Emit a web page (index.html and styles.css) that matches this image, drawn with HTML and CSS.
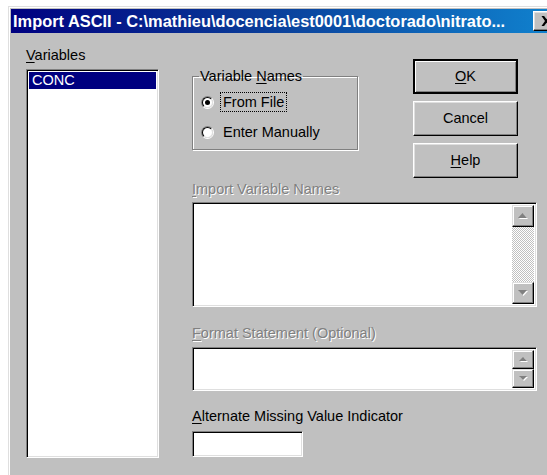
FILE: index.html
```html
<!DOCTYPE html>
<html lang="en">
<head>
<meta charset="utf-8">
<title>Import ASCII</title>
<link rel="stylesheet" href="styles.css">
</head>
<body>
<div class="window">
  <div class="titlebar">
    <span class="title">Import ASCII - C:\mathieu\docencia\est0001\doctorado\nitrato...</span>
    <button class="close" aria-label="Close">
      <svg width="11" height="10" viewBox="0 0 11 10"><path d="M0.5 0h2.6L5.5 3.3 7.9 0h2.6L7 5l3.5 5H7.9L5.5 6.7 3.1 10H0.5L4 5z" fill="#000"/></svg>
    </button>
  </div>
  <div class="content">
    <div class="left-col">
      <div class="label"><u>V</u>ariables</div>
      <div class="sunken listbox">
        <div class="list-item selected">CONC</div>
      </div>
    </div>
    <div class="right-col">
      <div class="top-row">
        <fieldset class="group">
          <legend>Variable <u>N</u>ames</legend>
          <div class="radio-row">
            <span class="radio"><span class="radio-in"><span class="dot"></span></span></span>
            <span class="focus">From File</span>
          </div>
          <div class="radio-row">
            <span class="radio"><span class="radio-in"></span></span>
            <span class="plain">Enter Manually</span>
          </div>
        </fieldset>
        <div class="buttons">
          <button class="btn default"><u>O</u>K</button>
          <button class="btn">Cancel</button>
          <button class="btn"><u>H</u>elp</button>
        </div>
      </div>

      <div class="label disabled import-label"><u>I</u>mport Variable Names</div>
      <div class="sunken field names-field">
        <div class="field-text"></div>
        <div class="scrollbar">
          <span class="sb-btn tall">
            <svg width="10" height="6" viewBox="0 0 10 6"><path d="M1 6L5.5 1 10 6z" fill="#fff"/><path d="M0 5L4.5 0 9 5z" fill="#808080"/></svg>
          </span>
          <span class="sb-track"></span>
          <span class="sb-btn tall">
            <svg width="10" height="6" viewBox="0 0 10 6"><path d="M1 1h9L5.5 6z" fill="#fff"/><path d="M0 0h9L4.5 5z" fill="#808080"/></svg>
          </span>
        </div>
      </div>

      <div class="label disabled format-label"><u>F</u>ormat Statement (Optional)</div>
      <div class="sunken field format-field">
        <div class="field-text"></div>
        <div class="scrollbar">
          <span class="sb-btn">
            <svg width="9" height="5" viewBox="0 0 9 5"><path d="M1 5L5 1 9 5z" fill="#fff"/><path d="M0 4L4 0 8 4z" fill="#808080"/></svg>
          </span>
          <span class="sb-btn">
            <svg width="9" height="5" viewBox="0 0 9 5"><path d="M1 1h8L5 5z" fill="#fff"/><path d="M0 0h8L4 4z" fill="#808080"/></svg>
          </span>
        </div>
      </div>

      <div class="label alt-label"><u>A</u>lternate Missing Value Indicator</div>
      <div class="sunken field alt-field"></div>
    </div>
  </div>
</div>
</body>
</html>
```

FILE: styles.css
```css
html, body {
  margin: 0;
  height: 100%;
  overflow: hidden;
  background: #fff;
}

body {
  font-family: "Liberation Sans", Arial, sans-serif;
  font-size: 14.5px;
  line-height: 17px;
  color: #000;
}

u { text-decoration-thickness: 1px; text-underline-offset: 2px; }

/* window frame */
.window {
  margin: 6px 0 0 8px;
  width: 556px;
  height: 480px;
  box-sizing: border-box;
  background: #c0c0c0;
  border-top: 1px solid #dfdfdf;
  border-left: 1px solid #dfdfdf;
  box-shadow: inset 1px 1px 0 #fff;
  padding: 2px 3px 0 2px;
  display: flex;
  flex-direction: column;
}

.titlebar {
  height: 24px;
  display: flex;
  align-items: center;
  background: linear-gradient(90deg, #000080 0%, #0a3c98 45%, #1084d0 100%);
  flex-shrink: 0;
}

.title {
  flex: 1;
  color: #fff;
  font-weight: bold;
  font-size: 16.4px;
  padding-left: 2px;
  white-space: nowrap;
  overflow: hidden;
}

.close {
  width: 26px;
  height: 20px;
  margin: 0 2px 0 2px;
  padding: 0;
  display: flex;
  align-items: center;
  justify-content: center;
  background: #c0c0c0;
  border: 1px solid;
  border-color: #fff #000 #000 #fff;
  box-shadow: inset -1px -1px 0 #808080, inset 1px 1px 0 #dfdfdf;
}

/* dialog body */
.content {
  display: flex;
  padding-left: 15px;
}

.label { white-space: nowrap; }

.disabled {
  color: #808080;
  text-shadow: 1px 1px 0 #fff;
}

.left-col {
  width: 133px;
  padding-top: 14px;
}

.left-col .label { margin-bottom: 5px; }

.sunken {
  box-sizing: border-box;
  background: #fff;
  border: 1px solid;
  border-color: #808080 #fff #fff #808080;
  box-shadow: inset 1px 1px 0 #000, inset -1px -1px 0 #dfdfdf;
}

.listbox {
  height: 389px;
  padding: 2px;
}

.list-item {
  height: 17px;
  padding-left: 3px;
}

.selected {
  background: #000080;
  color: #fff;
}

.right-col {
  margin-left: 33px;
  padding-top: 26px;
}

.top-row {
  display: flex;
  align-items: flex-start;
}

.group {
  box-sizing: border-box;
  width: 166px;
  margin: 9px 0 0 0;
  padding: 7px 0 7px 8px;
  border: 1px solid #808080;
  box-shadow: 1px 1px 0 #fff, inset 1px 1px 0 #fff;
  display: flex;
  flex-direction: column;
  gap: 10px;
}

.group legend {
  padding: 0 1px;
  margin-left: -2px;
}

.radio-row {
  display: flex;
  align-items: center;
  height: 20px;
}

.radio {
  width: 13px;
  height: 13px;
  box-sizing: border-box;
  border-radius: 50%;
  border: 1px solid;
  border-color: #808080 #fff #fff #808080;
  display: flex;
  margin-right: 6px;
}

.radio-in {
  flex: 1;
  border-radius: 50%;
  border: 1px solid;
  border-color: #000 #dfdfdf #dfdfdf #000;
  background: #fff;
  display: flex;
  align-items: center;
  justify-content: center;
}

.dot {
  width: 5px;
  height: 5px;
  border-radius: 50%;
  background: #000;
}

.focus {
  border: 1px dotted #000;
  padding: 1px 2px 0 2px;
  line-height: 17px;
}

.plain { padding-left: 3px; }

.buttons {
  margin-left: 55px;
  display: flex;
  flex-direction: column;
  gap: 7px;
}

.btn {
  width: 105px;
  height: 35px;
  padding: 0;
  font: inherit;
  color: #000;
  background: #c0c0c0;
  border: 1px solid;
  border-color: #fff #000 #000 #fff;
  box-shadow: inset -1px -1px 0 #808080, inset 1px 1px 0 #dfdfdf;
}

.btn.default {
  border: 2px solid #000;
  box-shadow: inset 1px 1px 0 #fff, inset -1px -1px 0 #808080;
}

.import-label { margin-top: 3px; margin-bottom: 4px; }
.format-label { margin-top: 18px; margin-bottom: 5px; }
.alt-label { margin-top: 17px; margin-bottom: 6px; }

.field {
  width: 345px;
  display: flex;
  padding: 2px;
}

.field-text { flex: 1; }

.names-field { height: 105px; }
.format-field { height: 44px; }
.alt-field { width: 111px; height: 26px; }

.scrollbar {
  width: 22px;
  display: flex;
  flex-direction: column;
}

.sb-btn {
  box-sizing: border-box;
  height: 20px;
  display: flex;
  align-items: center;
  justify-content: center;
  background: #c0c0c0;
  border: 1px solid;
  border-color: #dfdfdf #000 #000 #dfdfdf;
  box-shadow: inset -1px -1px 0 #808080, inset 1px 1px 0 #fff;
}

.sb-btn.tall { height: 22px; }

.sb-track {
  flex: 1;
  background: repeating-conic-gradient(#c0c0c0 0 25%, #fff 0 50%) 0 0 / 2px 2px;
}
```
